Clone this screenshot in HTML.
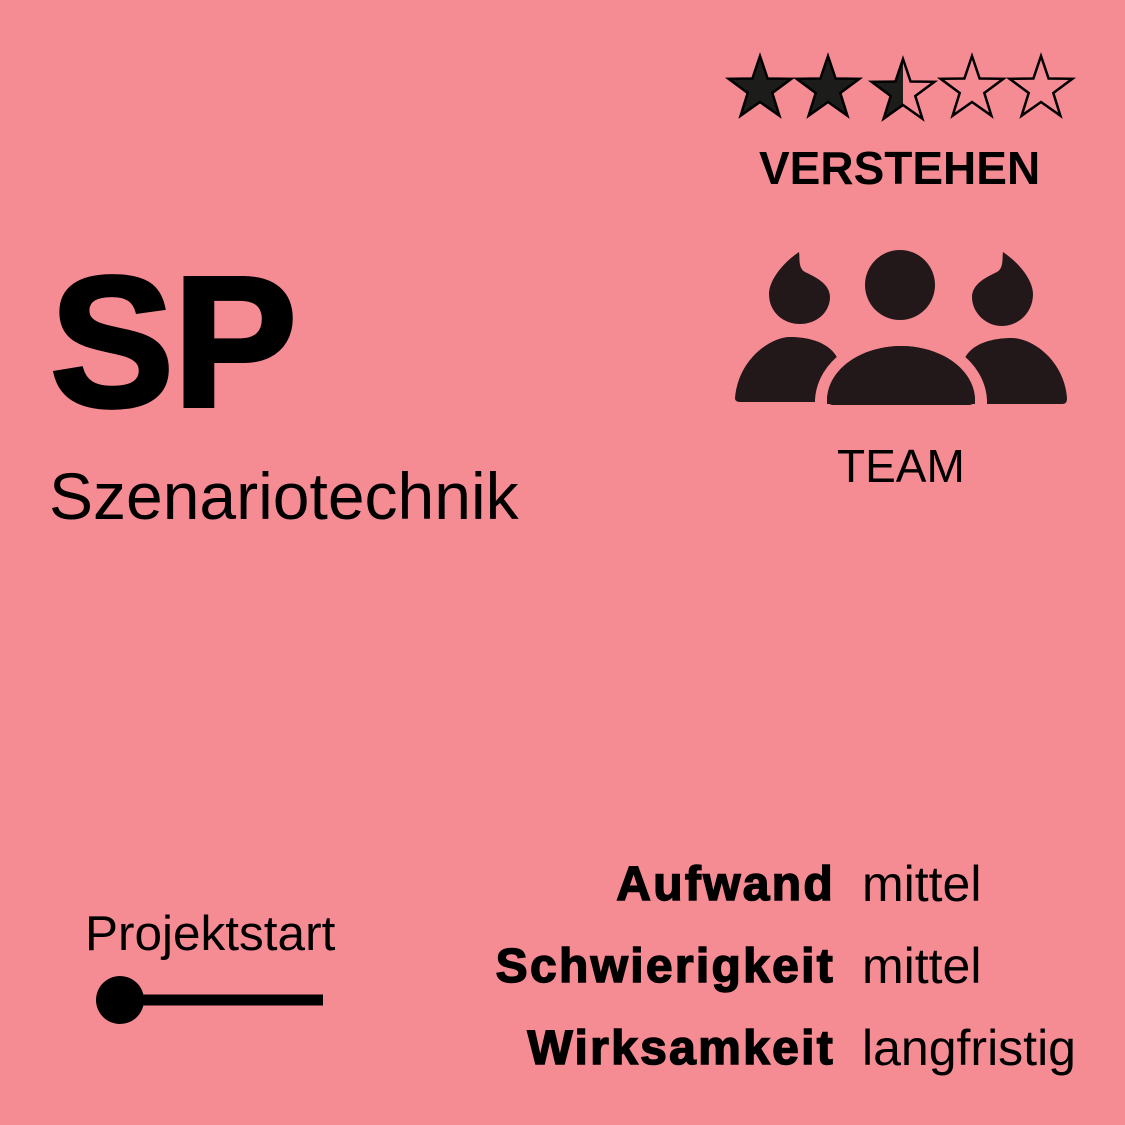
<!DOCTYPE html>
<html><head><meta charset="utf-8"><style>
body{margin:0;width:1125px;height:1125px;background:#F58C94;position:relative;overflow:hidden;font-family:"Liberation Sans",sans-serif;color:#000}
.a{position:absolute;white-space:nowrap;line-height:1}
.b{font-weight:bold;-webkit-text-stroke:1.5px #000;letter-spacing:2.3px}
</style></head><body>
<svg class="a" style="left:0;top:0" width="1125" height="1125">
<defs>
<polygon id="st" points="0,-33 7.6,-10.5 31.4,-10.2 12.3,4 19.4,26.7 0,13 -19.4,26.7 -12.3,4 -31.4,-10.2 -7.6,-10.5"/>
</defs>
<g stroke="#000" stroke-width="2.5" stroke-linejoin="miter">
<use href="#st" x="760" y="89" fill="#1c1c1a"/>
<use href="#st" x="828" y="89" fill="#1c1c1a"/>
<polygon transform="translate(903,92)" points="0,-33 0,13 -19.4,26.7 -12.3,4 -31.4,-10.2 -7.6,-10.5" fill="#1c1c1a" stroke="none"/>
<use href="#st" x="903" y="92" fill="none"/>
<use href="#st" x="972" y="89" fill="none"/>
<use href="#st" x="1041" y="89" fill="none"/>
</g>
<g fill="#231819">
<circle cx="900" cy="285" r="35"/>
<path d="M799,252 C780,265 769,282 769,294 C769,312 783,324 800,324 C817,324 830,312 830,297 C830,283 813,276 805,272 C798,268 800,258 799,252Z"/>
<path d="M1003,252 C1022,265 1033,282 1033,294 C1033,312 1019,326 1002,326 C985,326 972,312 972,297 C972,283 989,276 997,272 C1004,268 1002,258 1003,252Z"/>
<path d="M735,398 C738,360 770,337 790,337 C820,337 840,350 840,370 L840,402 L740,402 C736,402 735,400 735,398Z"/>
<path d="M1067,398 C1064,360 1032,338 1012,338 C982,338 962,350 962,370 L962,404 L1062,404 C1066,404 1067,402 1067,398Z"/>
<path d="M821,400 C823,365 860,340 901,340 C942,340 979,365 981,400 L981,410 L821,410Z" stroke="#F58C94" stroke-width="12"/>
<path d="M827,398 C829,368 862,346 901,346 C940,346 973,368 975,398 C975,402 973,405 969,405 L833,405 C829,405 827,402 827,398Z"/>
</g>
<circle cx="120" cy="1000" r="24" fill="#000"/>
<rect x="120" y="994.5" width="203" height="11" fill="#000"/>
</svg>
<div class="a" style="left:50px;top:250px;font-size:186px;font-weight:900;letter-spacing:-1px;-webkit-text-stroke:4px #000">SP</div>
<div class="a" style="left:49px;top:463px;font-size:66px">Szenariotechnik</div>
<div class="a" style="left:759px;top:145px;font-size:46px;font-weight:bold">VERSTEHEN</div>
<div class="a" style="left:837px;top:443px;font-size:46px">TEAM</div>
<div class="a" style="left:85px;top:909px;font-size:49.5px">Projektstart</div>
<div class="a b" style="right:290px;top:861px;font-size:48px">Aufwand</div>
<div class="a b" style="right:290px;top:943px;font-size:48px">Schwierigkeit</div>
<div class="a b" style="right:290px;top:1025px;font-size:48px">Wirksamkeit</div>
<div class="a" style="left:862px;top:859px;font-size:50px">mittel</div>
<div class="a" style="left:862px;top:941px;font-size:50px">mittel</div>
<div class="a" style="left:862px;top:1023px;font-size:50px">langfristig</div>
</body></html>
